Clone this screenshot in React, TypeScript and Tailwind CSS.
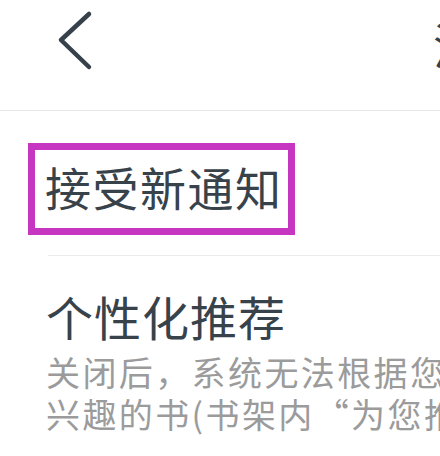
import React from "react";

export default function App() {
  return (
    <div
      className="w-[440px] h-[456px] overflow-hidden bg-white"
      style={{ fontFamily: '"Noto Sans CJK SC", "Noto Sans", sans-serif' }}
    >
      {/* Header */}
      <div className="h-[111px] border-b border-[#e6e6e6] flex items-start overflow-hidden">
        <svg
          className="ml-[56px] mt-[8px] shrink-0"
          width="40"
          height="66"
          viewBox="0 0 40 66"
          fill="none"
        >
          <polyline
            points="33,6 5,32 33,59"
            stroke="#37414b"
            strokeWidth="4.5"
            strokeLinecap="round"
            strokeLinejoin="round"
          />
        </svg>
        <div className="ml-[337px] mt-[19px] shrink-0 whitespace-nowrap text-[48px] leading-none text-[#37414b]">
          消息设置
        </div>
      </div>

      {/* Row 1 */}
      <div className="pt-[32px]">
        <div className="ml-[28px] w-[267px] h-[92px] border-[7px] border-[#c636c1] flex items-center pl-[10px] pb-[6px]">
          <span className="text-[46px] leading-none tracking-[1.5px] text-[#38424b] whitespace-nowrap">
            接受新通知
          </span>
        </div>
        <div className="ml-[48px] mt-[20px] h-px bg-[#ececec]" />
      </div>

      {/* Row 2 */}
      <div className="pl-[46px] pt-[36px] overflow-hidden">
        <div className="text-[47px] leading-none tracking-[1px] text-[#38424b] whitespace-nowrap">
          个性化推荐
        </div>
        <div className="mt-[12px] text-[34px] leading-[42px] tracking-[2.4px] text-[#9b9b9b] whitespace-nowrap">
          <div>关闭后，系统无法根据您的阅读偏好推荐</div>
          <div>兴趣的书(书架内“为您推荐”)</div>
        </div>
      </div>
    </div>
  );
}
